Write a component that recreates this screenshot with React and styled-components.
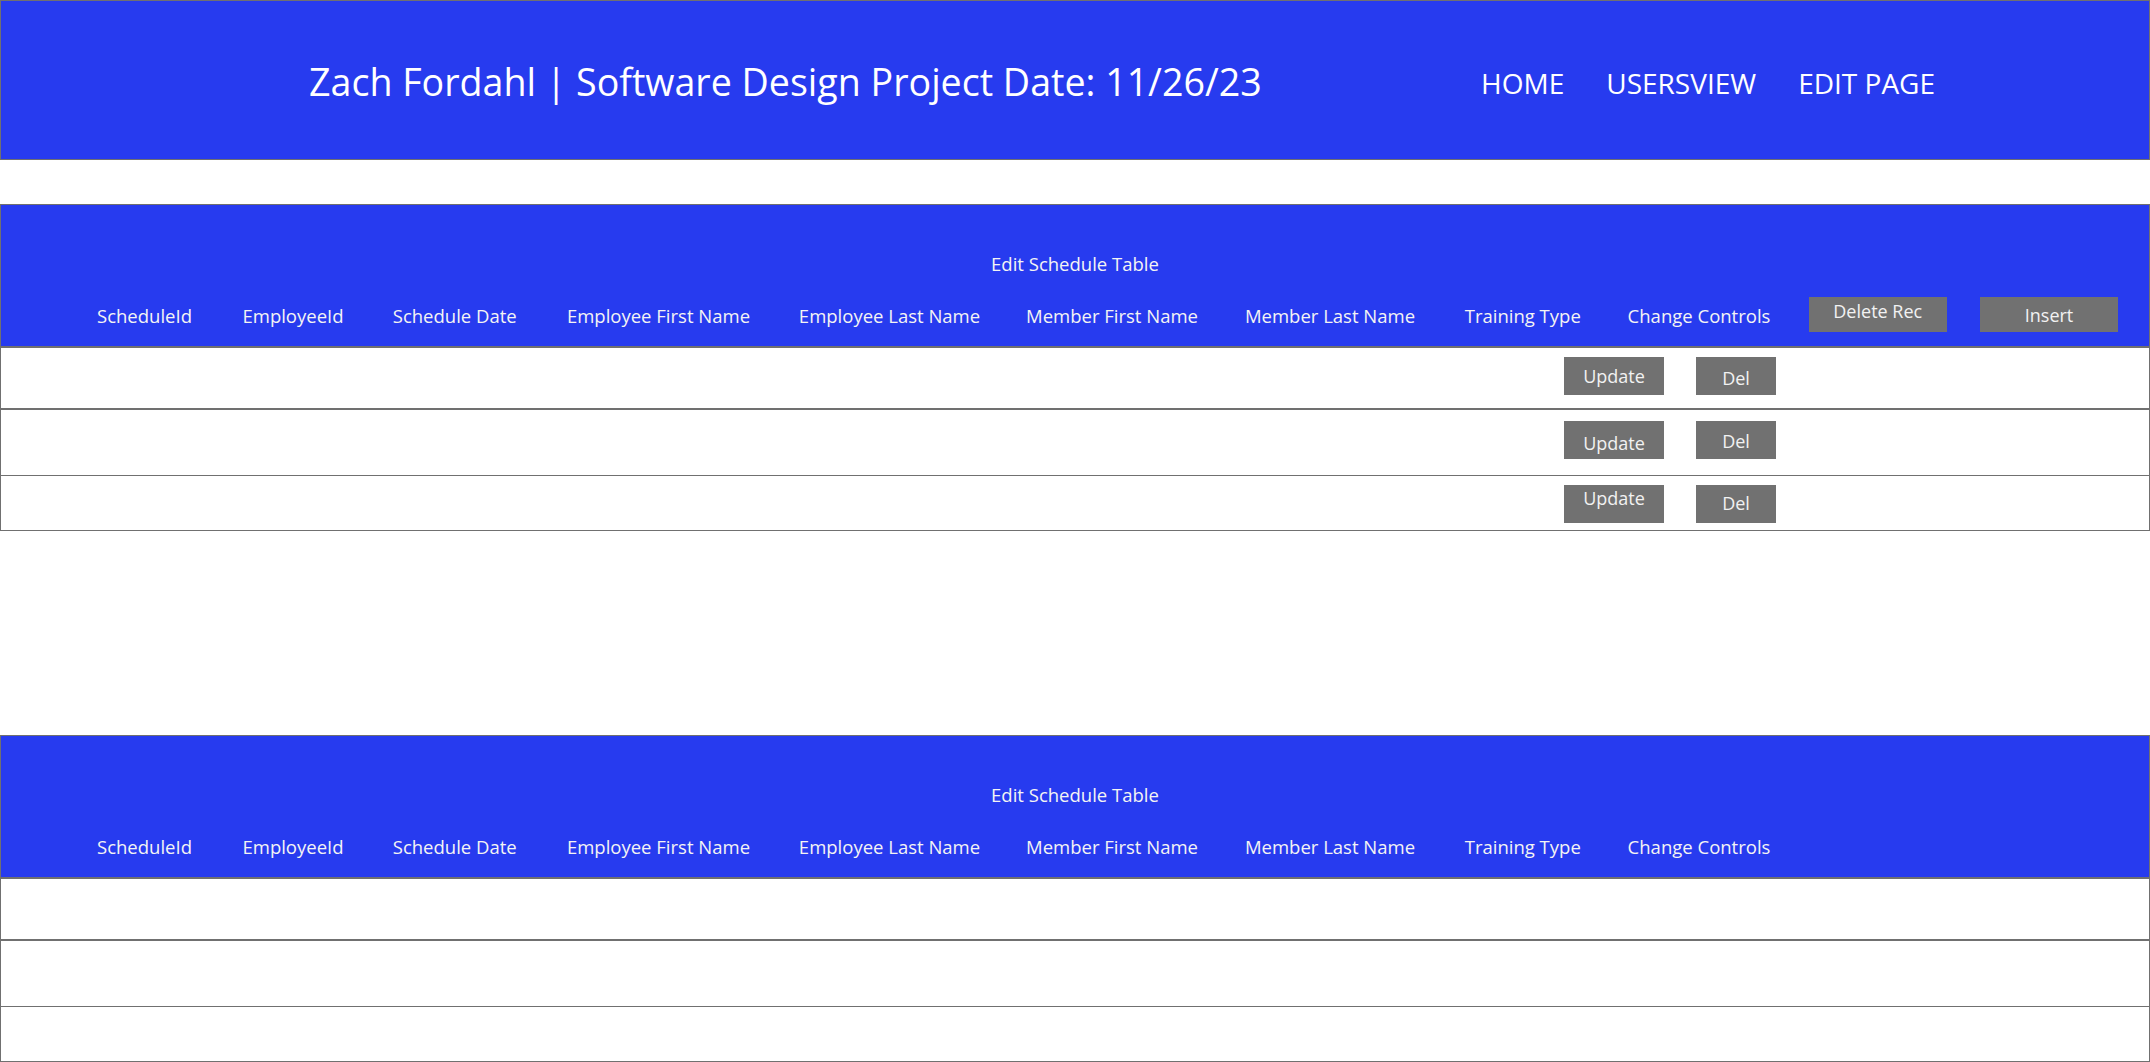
import React from "react";
import styled, { createGlobalStyle } from "styled-components";

const GlobalStyle = createGlobalStyle`
  html, body {
    margin: 0;
    padding: 0;
    background: #ffffff;
    font-family: "Open Sans", "Noto Sans", sans-serif;
  }
  * {
    box-sizing: border-box;
  }
`;

const BLUE = "#273bef";
const LINE = "#707070";

const Header = styled.header`
  display: flex;
  align-items: center;
  justify-content: space-between;
  height: 160px;
  padding: 2px 214px 0 308px;
  background: ${BLUE};
  border: 1px solid ${LINE};
  margin-bottom: 44px;
`;

const Title = styled.h1`
  margin: 0;
  font-size: 37.6px;
  font-weight: 400;
  color: #ffffff;
  white-space: nowrap;
`;

const Nav = styled.nav`
  display: flex;
  gap: 42px;
  padding-top: 4px;
`;

const NavLink = styled.a`
  font-size: 28px;
  color: #ffffff;
  text-decoration: none;
  white-space: nowrap;
`;

const Table = styled.section`
  border: 1px solid ${LINE};
  border-bottom: none;
  margin-top: ${(p) => p.$top}px;
`;

const Head = styled.div`
  height: 143px;
  background: ${BLUE};
  border-bottom: 2px solid ${LINE};
  padding-top: 45px;
  display: flex;
  flex-direction: column;
  gap: 19px;
`;

const Caption = styled.div`
  text-align: center;
  font-size: 18.5px;
  line-height: 28px;
  color: #f4f4f4;
`;

const Columns = styled.div`
  display: grid;
  grid-template-columns: 147px 150px 173.5px 234px 228px 217px 219px 166.5px 186px 171.5px 171px;
  padding-left: 70px;
  height: 35px;
`;

const Label = styled.div`
  display: flex;
  justify-content: center;
  padding-top: 6px;
  font-size: 18.5px;
  line-height: 26px;
  color: #f4f4f4;
  white-space: nowrap;
`;

const Cell = styled.div`
  display: flex;
  justify-content: center;
`;

const Button = styled.button`
  display: flex;
  justify-content: center;
  align-items: flex-start;
  width: ${(p) => p.$w}px;
  height: ${(p) => p.$h}px;
  padding: ${(p) => p.$pad}px 0 0 0;
  border: none;
  background: #717171;
  color: #f2f2f2;
  font-family: inherit;
  font-size: ${(p) => p.$size}px;
  line-height: 1;
  cursor: pointer;
`;

const Row = styled.div`
  display: flex;
  justify-content: flex-end;
  align-items: flex-start;
  gap: 32px;
  height: ${(p) => p.$h + p.$line}px;
  padding-top: ${(p) => p.$pad}px;
  padding-right: 373px;
  border-bottom: ${(p) => p.$line}px solid ${LINE};
`;

const headers = [
  "ScheduleId",
  "EmployeeId",
  "Schedule Date",
  "Employee First Name",
  "Employee Last Name",
  "Member First Name",
  "Member Last Name",
  "Training Type",
  "Change Controls",
];

const rows = [
  { h: 60, line: 2, pad: 9, upd: 10, del: 12 },
  { h: 65, line: 1, pad: 11, upd: 13, del: 11 },
  { h: 54, line: 1, pad: 9, upd: 4, del: 9 },
];

function ScheduleTable({ top, editable }) {
  return (
    <Table $top={top}>
      <Head>
        <Caption>Edit Schedule Table</Caption>
        <Columns>
          {headers.map((h) => (
            <Label key={h}>{h}</Label>
          ))}
          {editable && (
            <>
              <Cell>
                <Button $w={138} $h={35} $pad={5} $size={18}>
                  Delete Rec
                </Button>
              </Cell>
              <Cell>
                <Button $w={138} $h={35} $pad={9} $size={18}>
                  Insert
                </Button>
              </Cell>
            </>
          )}
        </Columns>
      </Head>
      {rows.map((r, i) => (
        <Row key={i} $h={r.h} $line={r.line} $pad={r.pad}>
          {editable && (
            <>
              <Button $w={100} $h={38} $pad={r.upd} $size={18}>
                Update
              </Button>
              <Button $w={80} $h={38} $pad={r.del} $size={18}>
                Del
              </Button>
            </>
          )}
        </Row>
      ))}
    </Table>
  );
}

export default function App() {
  return (
    <>
      <GlobalStyle />
      <Header>
        <Title>Zach Fordahl | Software Design Project Date: 11/26/23</Title>
        <Nav>
          <NavLink href="#">HOME</NavLink>
          <NavLink href="#">USERSVIEW</NavLink>
          <NavLink href="#">EDIT PAGE</NavLink>
        </Nav>
      </Header>
      <ScheduleTable top={0} editable />
      <ScheduleTable top={204} />
    </>
  );
}
